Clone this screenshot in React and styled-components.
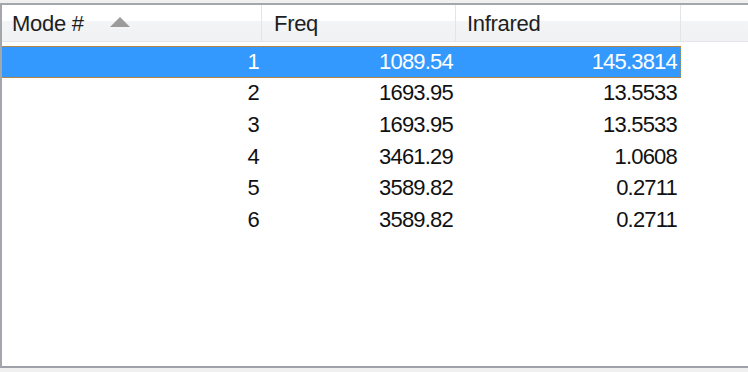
import React from "react";
import styled, { createGlobalStyle } from "styled-components";

const Global = createGlobalStyle`
  html, body { margin: 0; padding: 0; background: #f0f0f0; }
  body { font-family: "Liberation Sans", Arial, sans-serif; }
`;

const COLS = "262px 194px 225px 1fr";

const Frame = styled.div`
  margin-top: 3px;
  height: 361px;
  background: #ffffff;
  border-top: 2px solid #a3a6ab;
  border-left: 2px solid #a3a6ab;
  border-bottom: 2px solid #9ea2a8;
  box-sizing: content-box;
  overflow: hidden;
`;

const Header = styled.div`
  display: grid;
  grid-template-columns: ${COLS};
  height: 36px;
  border-bottom: 1px solid #e3e5e8;
  background: linear-gradient(#ffffff 0%, #ffffff 45%, #f3f4f6 45%, #f1f2f4 100%);
  margin-left: -2px;
`;

const HeadCell = styled.div`
  display: flex;
  align-items: center;
  padding-left: ${(p) => p.$pad}px;
  padding-top: 1px;
  border-right: 1px solid #e2e4e8;
  font-size: 22px;
  letter-spacing: -0.3px;
  color: #1e1e1e;
  &:last-child { border-right: none; }
`;

const ArrowWrap = styled.span`
  display: inline-flex;
  margin-left: 26px;
  margin-top: -3px;
`;

const Body = styled.div`
  padding-top: 4px;
  margin-left: -2px;
`;

const Row = styled.div`
  display: grid;
  grid-template-columns: 262px 194px 225px;
  width: 681px;
  height: 31.6px;
  box-sizing: border-box;
  background: ${(p) => (p.$selected ? "#3399ff" : "transparent")};
  border: 1px dotted ${(p) => (p.$selected ? "#b8874a" : "transparent")};
  color: ${(p) => (p.$selected ? "#ffffff" : "#111111")};
  font-size: 22px;
  letter-spacing: -0.8px;
`;

const Cell = styled.div`
  display: flex;
  align-items: center;
  justify-content: flex-end;
  padding-right: ${(p) => p.$pr}px;
`;

const SortArrow = () => (
  <svg width="20" height="10" viewBox="0 0 20 10">
    <polygon points="10,0 20,10 0,10" fill="#9b9b9b" />
  </svg>
);

const data = [
  [1, "1089.54", "145.3814"],
  [2, "1693.95", "13.5533"],
  [3, "1693.95", "13.5533"],
  [4, "3461.29", "1.0608"],
  [5, "3589.82", "0.2711"],
  [6, "3589.82", "0.2711"],
];

export default function App() {
  return (
    <>
      <Global />
      <Frame>
        <Header>
          <HeadCell $pad={12}>
            Mode #
            <ArrowWrap>
              <SortArrow />
            </ArrowWrap>
          </HeadCell>
          <HeadCell $pad={12}>Freq</HeadCell>
          <HeadCell $pad={11}>Infrared</HeadCell>
          <HeadCell $pad={0} />
        </Header>
        <Body>
          {data.map(([m, f, ir], i) => (
            <Row key={m} $selected={i === 0}>
              <Cell $pr={4}>{m}</Cell>
              <Cell $pr={4}>{f}</Cell>
              <Cell $pr={5}>{ir}</Cell>
            </Row>
          ))}
        </Body>
      </Frame>
    </>
  );
}
